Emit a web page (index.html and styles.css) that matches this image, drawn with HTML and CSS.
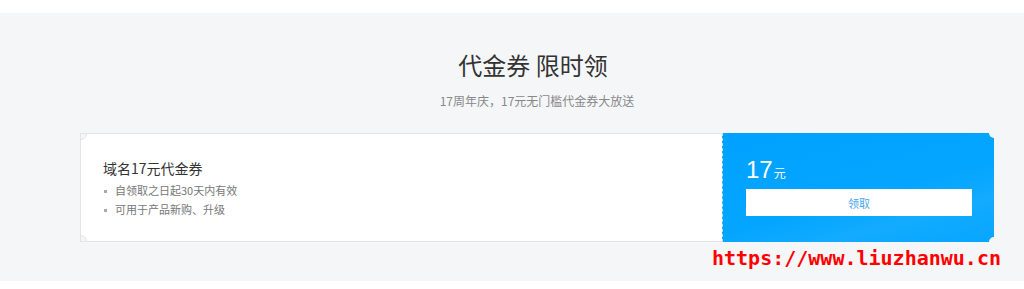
FILE: index.html
```html
<!DOCTYPE html>
<html lang="zh-CN">
<head>
<meta charset="utf-8">
<title>代金券 限时领</title>
<link rel="stylesheet" href="styles.css">
</head>
<body>
<div class="topbar"></div>
<section class="promo">
  <h2 class="promo-title">代金券 限时领</h2>
  <p class="promo-sub">17周年庆，17元无门槛代金券大放送</p>
  <div class="coupon">
    <div class="coupon-info">
      <div class="coupon-name">域名17元代金券</div>
      <ul class="coupon-rules">
        <li>自领取之日起30天内有效</li>
        <li>可用于产品新购、升级</li>
      </ul>
    </div>
    <div class="coupon-side">
      <div class="coupon-amount">17<span class="unit">元</span></div>
      <button class="coupon-btn">领取</button>
    </div>
    <div class="watermark">https://www.liuzhanwu.cn</div>
  </div>
</section>
</body>
</html>
```
FILE: styles.css
```css
* { box-sizing: border-box; }
html, body { margin: 0; padding: 0; background: #fff; }
body {
  font-family: "Microsoft YaHei", "Noto Sans CJK SC", "Liberation Sans", sans-serif;
  color: #333;
}
.topbar { height: 13px; background: #fff; }
.promo {
  background: #f5f6f8;
  padding: 36px 0 39px;
}
.promo-title {
  margin: 0;
  text-align: center;
  font-size: 24px;
  line-height: 32px;
  font-weight: normal;
  color: #333;
  padding-left: 42px;
}
.promo-sub {
  margin: 10px 0 0;
  text-align: center;
  font-size: 12px;
  line-height: 20px;
  color: #888;
  padding-left: 50px;
}
.coupon {
  position: relative;
  display: flex;
  width: 914px;
  height: 109px;
  margin: 22px 0 0 80px;
}
.coupon-info {
  position: relative;
  flex: 0 0 642px;
  background: #fff;
  border: 1px solid #e3e4e6;
  border-right: none;
  padding: 24px 0 0 22px;
  overflow: hidden;
}
.coupon-info::before,
.coupon-info::after {
  content: "";
  position: absolute;
  left: -6px;
  width: 10px;
  height: 10px;
  border-radius: 50%;
  background: #f5f6f8;
  border: 1px solid #e3e4e6;
}
.coupon-info::before { top: -6px; }
.coupon-info::after { bottom: -6px; }
.coupon-name {
  font-size: 14px;
  line-height: 20px;
  color: #333;
}
.coupon-rules {
  list-style: none;
  margin: 3px 0 0;
  padding: 0;
}
.coupon-rules li {
  position: relative;
  font-size: 11px;
  line-height: 19px;
  color: #777;
  padding-left: 12px;
}
.coupon-rules li::before {
  content: "";
  position: absolute;
  left: 1px;
  top: 9px;
  width: 3px;
  height: 3px;
  background: #aaa;
}
.coupon-side {
  position: relative;
  flex: 0 0 272px;
  background: linear-gradient(165deg, #00a2ff 0%, #04a5ff 55%, #12abff 75%, #07a6ff 100%);
  border-left: 1px dashed #b8e4ff;
  padding: 24px 0 0 23px;
}
.coupon-side::before,
.coupon-side::after {
  content: "";
  position: absolute;
  right: -5px;
  width: 10px;
  height: 10px;
  border-radius: 50%;
  background: #f5f6f8;
}
.coupon-side::before { top: -5px; }
.coupon-side::after { bottom: -5px; }
.coupon-amount {
  color: #fff;
  font-family: "Liberation Sans", Arial, sans-serif;
  font-size: 24px;
  line-height: 25px;
  height: 25px;
}
.coupon-amount .unit {
  font-family: "Noto Sans CJK SC", sans-serif;
  font-size: 12px;
  margin-left: 1px;
}
.coupon-btn {
  display: block;
  margin-top: 7px;
  width: 226px;
  height: 27px;
  border: none;
  background: #fff;
  color: #4aa8ee;
  font-family: "Noto Sans CJK SC", sans-serif;
  font-size: 11px;
  cursor: pointer;
  padding: 0;
}
.watermark {
  position: absolute;
  left: 632px;
  top: 113px;
  color: #ff0000;
  font-family: "DejaVu Sans Mono", "Liberation Mono", monospace;
  font-weight: bold;
  font-size: 20px;
  line-height: 24px;
  white-space: nowrap;
}
```
